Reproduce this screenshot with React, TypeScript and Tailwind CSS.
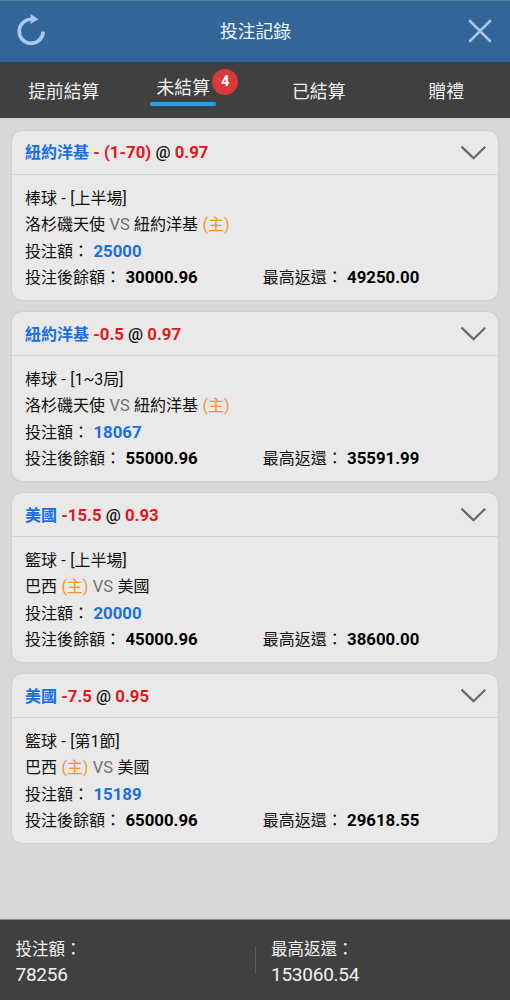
const tabs = [
  { label: "提前結算" },
  { label: "未結算", active: true, count: 4 },
  { label: "已結算" },
  { label: "贈禮" },
];

type Team = { name: string; home?: boolean };

type Bet = {
  pick: string;
  handicap: string;
  odds: string;
  event: string;
  teams: [Team, Team];
  stake: string;
  balance: string;
  payout: string;
};

const yankeesGame: [Team, Team] = [{ name: "洛杉磯天使" }, { name: "紐約洋基", home: true }];
const usaGame: [Team, Team] = [{ name: "巴西", home: true }, { name: "美國" }];

const bets: Bet[] = [
  { pick: "紐約洋基", handicap: "- (1-70)", odds: "0.97", event: "棒球 - [上半場]", teams: yankeesGame, stake: "25000", balance: "30000.96", payout: "49250.00" },
  { pick: "紐約洋基", handicap: "-0.5", odds: "0.97", event: "棒球 - [1~3局]", teams: yankeesGame, stake: "18067", balance: "55000.96", payout: "35591.99" },
  { pick: "美國", handicap: "-15.5", odds: "0.93", event: "籃球 - [上半場]", teams: usaGame, stake: "20000", balance: "45000.96", payout: "38600.00" },
  { pick: "美國", handicap: "-7.5", odds: "0.95", event: "籃球 - [第1節]", teams: usaGame, stake: "15189", balance: "65000.96", payout: "29618.55" },
];

function RefreshIcon() {
  return (
    <svg width="30" height="32" viewBox="0 0 30 32" fill="none">
      <path d="M27.2 17.6A12 12 0 1 1 16.5 5.4" stroke="#a9c9ec" strokeWidth="3.6" />
      <path d="M14.6 0L22.4 5.2L14.6 10Z" fill="#a9c9ec" />
    </svg>
  );
}

function CloseIcon() {
  return (
    <svg width="24" height="24" viewBox="0 0 24 24" fill="none">
      <path d="M2 2L22 22M22 2L2 22" stroke="#a9c4e4" strokeWidth="2.6" strokeLinecap="round" />
    </svg>
  );
}

function ChevronIcon() {
  return (
    <svg width="26" height="16" viewBox="0 0 26 16" fill="none">
      <path d="M1.5 1.7L13.5 13.2L25.3 1.7" stroke="#6a6a6a" strokeWidth="2.3" />
    </svg>
  );
}

function TeamName({ team }: { team: Team }) {
  return (
    <>
      {team.name}
      {team.home && <span className="text-[#f2952a]"> (主)</span>}
    </>
  );
}

function BetCard({ bet }: { bet: Bet }) {
  return (
    <article className="h-[169px] shrink-0 rounded-[10px] bg-[#e9e9e9] text-[16px] leading-[26.4px] [word-spacing:0.4px] whitespace-nowrap text-[#111] shadow-[0_0_2px_rgba(0,0,0,0.15)]">
      <header className="flex h-11 items-center justify-between border-b border-[#d3d3d3] pr-3 pl-[13px]">
        <h2 className="pt-px text-[16.8px] font-bold [word-spacing:0px]">
          <span className="text-[16px] text-[#1a6fe0]">{bet.pick}</span> <span className="text-[#e3161a]">{bet.handicap}</span>{" "}
          <span className="font-medium">@</span> <span className="text-[#e3161a]">{bet.odds}</span>
        </h2>
        <ChevronIcon />
      </header>
      <div className="grid auto-rows-[26.4px] px-[13px] pt-[10.6px]">
        <p>{bet.event}</p>
        <p>
          <TeamName team={bet.teams[0]} /> <span className="text-[16.5px] leading-none text-[#707070]">VS</span> <TeamName team={bet.teams[1]} />
        </p>
        <p>
          投注額： <b className="text-[16.8px] leading-none text-[#1a6fe0]">{bet.stake}</b>
        </p>
        <div className="flex">
          <p className="w-[237.7px]">
            投注後餘額： <b className="text-[16.8px] leading-none text-black">{bet.balance}</b>
          </p>
          <p>
            最高返還： <b className="text-[16.8px] leading-none text-black">{bet.payout}</b>
          </p>
        </div>
      </div>
    </article>
  );
}

export default function App() {
  return (
    <div className="flex h-[1000px] w-[510px] flex-col overflow-hidden bg-[#d8d8d8] font-[Roboto,'Noto_Sans_CJK_TC',sans-serif]">
      <header className="flex h-[62px] shrink-0 items-center justify-between border-t border-[#56799f] bg-[#326698] pr-[18px] pl-4">
        <button aria-label="重新整理" className="pb-[3px]">
          <RefreshIcon />
        </button>
        <h1 className="pt-px pr-[3px] text-[17.8px] text-[#f2f6fa]">投注記錄</h1>
        <button aria-label="關閉" className="pb-px">
          <CloseIcon />
        </button>
      </header>

      <nav className="grid h-14 shrink-0 grid-cols-4 bg-[#404040] text-[17.8px] leading-6 text-[#f2f2f2]">
        {tabs.map((tab) =>
          tab.active ? (
            <button key={tab.label} className="flex items-center justify-center pt-px pr-4">
              <span className="relative w-[66px]">
                {tab.label}
                <span className="mt-[2px] block h-1 rounded-full bg-[#1ea4e6]" />
                <span className="absolute -top-[7px] left-[62px] flex size-[26px] items-center justify-center rounded-full bg-[#d83a3a] pb-px text-[14px] font-bold text-white">
                  {tab.count}
                </span>
              </span>
            </button>
          ) : (
            <button key={tab.label} className="flex items-center justify-center pt-[3px]">
              {tab.label}
            </button>
          ),
        )}
      </nav>

      <main className="flex flex-1 flex-col gap-[12.1px] px-3 pt-[13.2px]">
        {bets.map((bet, i) => (
          <BetCard key={i} bet={bet} />
        ))}
      </main>

      <footer className="flex h-[81px] shrink-0 items-center border-t border-[#8c8c8c] bg-[#404040] text-[#f2f2f2]">
        <div className="w-[255px] pt-[4px] pl-[15.5px]">
          <p className="text-[16.5px] leading-[25px]">投注額：</p>
          <p className="text-[19px] leading-[25px] tracking-[-0.25px]">78256</p>
        </div>
        <div className="h-7 w-px bg-[#5e5e5e]" />
        <div className="pt-[4px] pl-[15px]">
          <p className="text-[16.5px] leading-[25px]">最高返還：</p>
          <p className="text-[19px] leading-[25px] tracking-[-0.25px]">153060.54</p>
        </div>
      </footer>
    </div>
  );
}
